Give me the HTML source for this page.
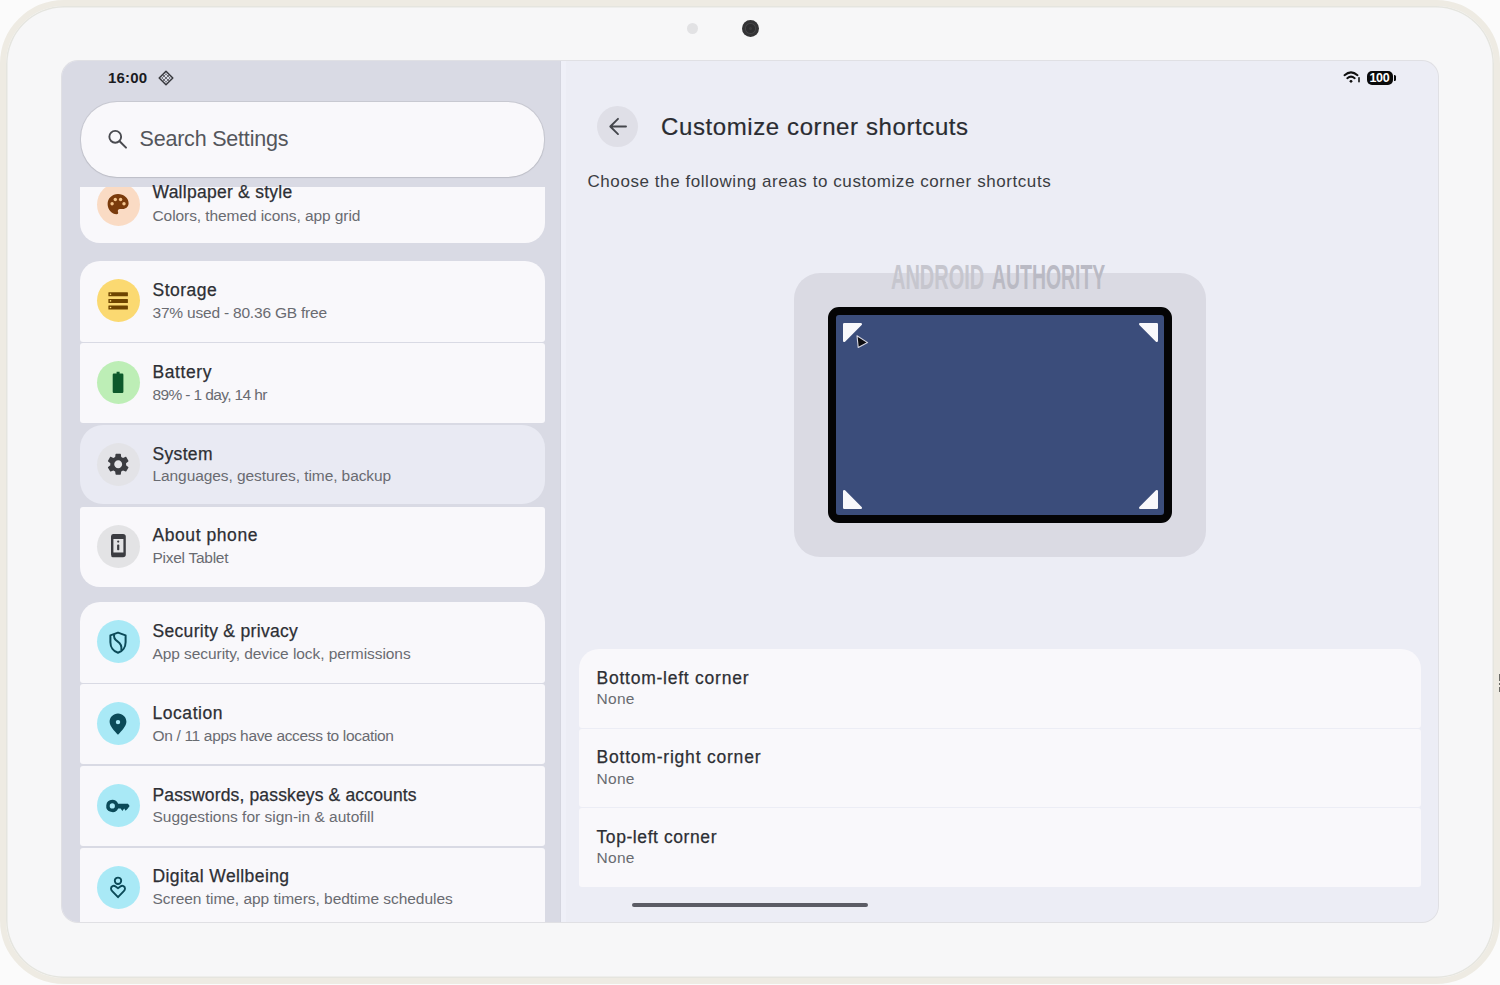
<!DOCTYPE html>
<html><head><meta charset="utf-8"><style>
*{margin:0;padding:0;box-sizing:border-box}
html,body{width:1500px;height:985px;overflow:hidden;background:#fbfbfb;font-family:"Liberation Sans",sans-serif}
.a{position:absolute}
.tx{position:absolute;line-height:1;white-space:nowrap}
#frame{position:absolute;left:0;top:0;width:1500px;height:984px;border-radius:64px;border:6.5px solid #eeebe3;background:#f7f7f8;box-shadow:inset 0 0 0 1.5px #e5e5df}
#screen{position:absolute;left:62px;top:61px;width:1376px;height:861px;border-radius:16px;overflow:hidden;background:#ecedf5;box-shadow:0 0 0 1px #e0e0e4}
#pc{position:absolute;left:-62px;top:-61px;width:1500px;height:985px}
.card{position:absolute;left:79.5px;width:465px;height:80.3px;background:#f9f8fb;border-radius:3px}
.ic{position:absolute;left:96.5px;width:43px;height:43px;border-radius:50%}
.rc{position:absolute;left:579px;width:842px;height:78.5px;background:#f9f8fb;border-radius:3px}
svg{position:absolute;overflow:visible}
</style></head><body>
<div id="frame"></div>
<div class="a" style="left:686.5px;top:22.8px;width:11px;height:11px;border-radius:50%;background:#e2e2e4"></div>
<div class="a" style="left:741.5px;top:20.3px;width:17px;height:17px;border-radius:50%;background:radial-gradient(circle at 50% 50%, #3a3a3c 0 1.2px, #2e2e30 1.6px 4.2px, #444446 5px, #343436 6px)"></div>
<div class="a" style="left:1499px;top:674px;width:1px;height:7px;background:#6b6b66"></div><div class="a" style="left:1499px;top:683px;width:1px;height:2px;background:#6b6b66"></div><div class="a" style="left:1499px;top:687px;width:1px;height:5px;background:#6b6b66"></div>
<div id="screen"><div id="pc">
<div class="a" style="left:62px;top:61px;width:499px;height:861px;background:#d9dae4;box-shadow:inset -1px 0 0 #d4d5df"></div>
<div class="a" style="left:561px;top:61px;width:5px;height:861px;background:#eff0f8"></div>
<div class="tx" style="left:108px;top:70.0px;font-size:15px;letter-spacing:0.2px;color:#1a1b1f;-webkit-text-stroke:0px #1a1b1f;font-weight:bold">16:00</div>
<svg style="left:158px;top:70px" width="16" height="16" viewBox="0 0 16 16"><path d="M8 1.2 L14.8 8 L8 14.8 L1.2 8 Z" fill="none" stroke="#3a3b40" stroke-width="1.5" stroke-linejoin="round"/><g fill="#3a3b40"><circle cx="6" cy="6" r="0.9"/><circle cx="10" cy="6" r="0.9"/><circle cx="8" cy="8" r="0.9"/><circle cx="6" cy="10" r="0.9"/><circle cx="10" cy="10" r="0.9"/><circle cx="4.3" cy="8" r="0.7"/><circle cx="11.7" cy="8" r="0.7"/><circle cx="8" cy="4.3" r="0.7"/><circle cx="8" cy="11.7" r="0.7"/></g></svg>
<svg style="left:1343px;top:70px" width="18" height="14" viewBox="0 0 18 14"><path d="M1.5 5.2 Q8 -0.5 14.5 5.2" fill="none" stroke="#111" stroke-width="2" stroke-linecap="round"/><path d="M4.3 8.2 Q8 5 11.7 8.2" fill="none" stroke="#111" stroke-width="2" stroke-linecap="round"/><circle cx="8" cy="11.3" r="1.4" fill="#111"/><rect x="15.2" y="7" width="1.6" height="5.5" rx="0.8" fill="#111"/></svg>
<div class="a" style="left:1367px;top:70.5px;width:26px;height:14.5px;border-radius:5px;background:#0a0a0a"></div>
<div class="a" style="left:1393.5px;top:75px;width:2.5px;height:6px;border-radius:0 1.5px 1.5px 0;background:#0a0a0a"></div>
<div class="tx" style="left:1369.5px;top:71.8px;font-size:12.5px;font-weight:bold;color:#fff;letter-spacing:-0.35px">100</div>
<div class="a" style="left:80.8px;top:101.8px;width:463px;height:75.2px;border-radius:36px;background:#f9f8fb;box-shadow:0 0.6px 1.2px #b5b6bf, 0 0 0 1px #c9cad3"></div>
<svg style="left:106px;top:128px" width="22" height="22" viewBox="0 0 22 22"><circle cx="9.25" cy="8.8" r="5.9" fill="none" stroke="#4a4b50" stroke-width="1.9"/><path d="M13.6 13.2 L20 19.6" stroke="#4a4b50" stroke-width="2" stroke-linecap="round"/></svg>
<div class="tx" style="left:139.5px;top:128.5px;font-size:21.5px;letter-spacing:-0.2px;color:#54565c;">Search Settings</div>
<div class="a" style="left:62px;top:187px;width:500px;height:735px;overflow:hidden"><div class="a" style="left:-62px;top:-187px;width:1500px;height:985px">
<div class="card" style="top:187px;height:56.3px;border-radius:0 0 20px 20px"></div>
<div class="card" style="top:261.3px;border-radius:20px 20px 3px 3px"></div>
<div class="card" style="top:343.1px"></div>
<div class="card" style="top:424.6px;height:79px;border-radius:23px;background:#e9eaf3"></div>
<div class="card" style="top:506.7px;border-radius:3px 3px 20px 20px"></div>
<div class="card" style="top:602.3px;border-radius:20px 20px 3px 3px"></div>
<div class="card" style="top:684.1px"></div>
<div class="card" style="top:765.9px"></div>
<div class="card" style="top:847.7px"></div>
<div class="ic" style="top:182.9px;background:#fadbc4"></div>
<div class="tx" style="left:152.5px;top:208.0px;font-size:15.5px;letter-spacing:-0.08px;color:#696b71;">Colors, themed icons, app grid</div>
<div class="ic" style="top:279.3px;background:#fbd971"></div>
<div class="tx" style="left:152.5px;top:281.9px;font-size:17.5px;letter-spacing:0.5px;color:#2d2f34;-webkit-text-stroke:0.25px #2d2f34;">Storage</div>
<div class="tx" style="left:152.5px;top:304.8px;font-size:15.5px;letter-spacing:-0.2px;color:#696b71;">37% used - 80.36 GB free</div>
<div class="ic" style="top:361.1px;background:#bdeeb6"></div>
<div class="tx" style="left:152.5px;top:363.7px;font-size:17.5px;letter-spacing:0.59px;color:#2d2f34;-webkit-text-stroke:0.25px #2d2f34;">Battery</div>
<div class="tx" style="left:152.5px;top:386.6px;font-size:15.5px;letter-spacing:-0.62px;color:#696b71;">89% - 1 day, 14 hr</div>
<div class="ic" style="top:442.9px;background:#e3e3e7"></div>
<div class="tx" style="left:152.5px;top:445.5px;font-size:17.5px;letter-spacing:0.33px;color:#2d2f34;-webkit-text-stroke:0.25px #2d2f34;">System</div>
<div class="tx" style="left:152.5px;top:468.4px;font-size:15.5px;letter-spacing:-0.08px;color:#696b71;">Languages, gestures, time, backup</div>
<div class="ic" style="top:524.7px;background:#e3e3e5"></div>
<div class="tx" style="left:152.5px;top:527.3px;font-size:17.5px;letter-spacing:0.57px;color:#2d2f34;-webkit-text-stroke:0.25px #2d2f34;">About phone</div>
<div class="tx" style="left:152.5px;top:550.2px;font-size:15.5px;letter-spacing:-0.27px;color:#696b71;">Pixel Tablet</div>
<div class="ic" style="top:620.3px;background:#a9e9f6"></div>
<div class="tx" style="left:152.5px;top:622.9px;font-size:17.5px;letter-spacing:0.31px;color:#2d2f34;-webkit-text-stroke:0.25px #2d2f34;">Security &amp; privacy</div>
<div class="tx" style="left:152.5px;top:645.8px;font-size:15.5px;letter-spacing:-0.07px;color:#696b71;">App security, device lock, permissions</div>
<div class="ic" style="top:702.1px;background:#a9e9f6"></div>
<div class="tx" style="left:152.5px;top:704.7px;font-size:17.5px;letter-spacing:0.55px;color:#2d2f34;-webkit-text-stroke:0.25px #2d2f34;">Location</div>
<div class="tx" style="left:152.5px;top:727.6px;font-size:15.5px;letter-spacing:-0.33px;color:#696b71;">On / 11 apps have access to location</div>
<div class="ic" style="top:783.9px;background:#a9e9f6"></div>
<div class="tx" style="left:152.5px;top:786.5px;font-size:17.5px;letter-spacing:0.15px;color:#2d2f34;-webkit-text-stroke:0.25px #2d2f34;">Passwords, passkeys &amp; accounts</div>
<div class="tx" style="left:152.5px;top:809.4px;font-size:15.5px;letter-spacing:0.0px;color:#696b71;">Suggestions for sign-in &amp; autofill</div>
<div class="ic" style="top:865.7px;background:#a9e9f6"></div>
<div class="tx" style="left:152.5px;top:868.3px;font-size:17.5px;letter-spacing:0.41px;color:#2d2f34;-webkit-text-stroke:0.25px #2d2f34;">Digital Wellbeing</div>
<div class="tx" style="left:152.5px;top:891.2px;font-size:15.5px;letter-spacing:-0.03px;color:#696b71;">Screen time, app timers, bedtime schedules</div>
<svg style="left:106px;top:192px" width="24" height="24" viewBox="0 0 24 24"><path d="M12 2 C6.2 2 1.6 6.4 1.6 12 C1.6 17.6 6 22.2 10.6 22.2 C12.2 22.2 12.4 21 12 20 C11.4 18.6 12.2 17 14 17 L16.6 17 C20 17 22.6 14.6 22.6 11.2 C22.6 6 17.8 2 12 2 Z" fill="#7a3b0c"/><g fill="#f5c58e"><circle cx="9.3" cy="7.5" r="1.7"/><circle cx="14.6" cy="7.5" r="1.7"/><circle cx="6.1" cy="11.8" r="1.7"/><circle cx="18" cy="11.7" r="1.7"/></g></svg>
<svg style="left:108px;top:291px" width="20" height="20" viewBox="0 0 20 20"><g fill="#6e4400"><rect x="0.4" y="1.3" width="19.5" height="4" rx="0.5"/><rect x="0.4" y="7.9" width="19.5" height="4" rx="0.5"/><rect x="0.4" y="14.5" width="19.5" height="4" rx="0.5"/></g><g fill="#fbd971"><circle cx="2.5" cy="3.3" r="0.8"/><circle cx="2.5" cy="9.9" r="0.8"/><circle cx="2.5" cy="16.5" r="0.8"/></g></svg>
<svg style="left:112px;top:371px" width="12" height="23" viewBox="0 0 12 23"><path d="M4.6 0.8 H7.6 V2.6 H10.2 Q11.4 2.6 11.4 3.8 V20.8 Q11.4 22 10.2 22 H1.8 Q0.7 22 0.7 20.8 V3.8 Q0.7 2.6 1.8 2.6 H4.6 Z" fill="#0d5a2b"/></svg>
<svg style="left:104.8px;top:450.7px" width="26.4" height="26.4" viewBox="0 0 24 24"><path fill="#3b3c41" fill-rule="evenodd" d="M19.14 12.94c.04-.3.06-.61.06-.94 0-.32-.02-.64-.07-.94l2.03-1.58c.18-.14.23-.41.12-.61l-1.92-3.32c-.12-.22-.37-.29-.59-.22l-2.39.96c-.5-.38-1.03-.7-1.62-.94l-.36-2.54c-.04-.24-.24-.41-.48-.41h-3.84c-.24 0-.43.17-.47.41l-.36 2.54c-.59.24-1.13.57-1.62.94l-2.39-.96c-.22-.08-.47 0-.59.22L2.74 8.87c-.12.21-.08.47.12.61l2.03 1.58c-.05.3-.09.63-.09.94s.02.64.07.94l-2.03 1.58c-.18.14-.23.41-.12.61l1.92 3.32c.12.22.37.29.59.22l2.39-.96c.5.38 1.03.7 1.62.94l.36 2.54c.05.24.24.41.48.41h3.84c.24 0 .44-.17.47-.41l.36-2.54c.59-.24 1.13-.56 1.62-.94l2.39.96c.22.08.47 0 .59-.22l1.92-3.32c.12-.22.07-.47-.12-.61l-2.01-1.58zM12 15.6c-1.98 0-3.6-1.62-3.6-3.6s1.62-3.6 3.6-3.6 3.6 1.62 3.6 3.6-1.62 3.6-3.6 3.6z"/></svg>
<svg style="left:110px;top:533px" width="16" height="25" viewBox="0 0 16 25"><path fill="#3b3c41" fill-rule="evenodd" d="M3 1 H13 Q15.8 1 15.8 3.5 V21.5 Q15.8 24.2 13 24.2 H3 Q1 24.2 1 21.5 V3.5 Q1 1 3 1 Z M3.4 6 V19.5 H13.4 V6 Z"/><circle cx="8.2" cy="8.6" r="1.1" fill="#3b3c41"/><rect x="7.1" y="11.6" width="2.2" height="5.6" rx="0.8" fill="#3b3c41"/></svg>
<svg style="left:108px;top:631px" width="20" height="24" viewBox="0 0 20 24"><path d="M10 1.6 L17.6 4.4 V11.2 C17.6 16.2 14.4 20.4 10 21.8 C5.6 20.4 2.4 16.2 2.4 11.2 V4.4 Z" fill="none" stroke="#0b4a58" stroke-width="2" stroke-linejoin="round"/><path d="M6.2 3.2 C5.5 6.2 6.5 8.4 9.5 10.4 C12.8 12.6 14 15.2 13.2 19" fill="none" stroke="#0b4a58" stroke-width="2"/></svg>
<svg style="left:108px;top:712px" width="20" height="24" viewBox="0 0 20 24"><path fill="#0b4a58" fill-rule="evenodd" d="M10 1.6 C14.6 1.6 18.4 5.2 18.4 9.8 C18.4 14 14 18.6 10 22.8 C6 18.6 1.6 14 1.6 9.8 C1.6 5.2 5.4 1.6 10 1.6 Z M10 7.9 A2.2 2.2 0 1 0 10 12.3 A2.2 2.2 0 1 0 10 7.9 Z"/></svg>
<svg style="left:105px;top:798px" width="26" height="16" viewBox="0 0 26 16"><path fill="#0b4a58" fill-rule="evenodd" d="M7.3 1.7 A6.2 6.2 0 1 0 13.1 10.4 H15.6 L17.4 13 L19.2 10.4 L20.6 12.8 L22.8 10.4 L24.6 8.1 L23 5.7 H13.1 A6.2 6.2 0 0 0 7.3 1.7 Z M7.3 5.3 A2.6 2.6 0 1 0 7.3 10.5 A2.6 2.6 0 1 0 7.3 5.3 Z"/></svg>
<svg style="left:108px;top:875px" width="20" height="24" viewBox="0 0 20 24"><circle cx="10" cy="5.8" r="3.2" fill="none" stroke="#0b4a58" stroke-width="1.9"/><path d="M10 13.2 L7.6 11.4 C5.6 9.9 3 11.2 3 13.6 C3 14.6 3.5 15.4 4.2 16.1 L10 22.2 L15.8 16.1 C16.5 15.4 17 14.6 17 13.6 C17 11.2 14.4 9.9 12.4 11.4 Z" fill="none" stroke="#0b4a58" stroke-width="1.9" stroke-linejoin="round"/></svg>
</div></div>
<div class="tx" style="left:152.5px;top:184.4px;font-size:17.5px;letter-spacing:0.26px;color:#2d2f34;-webkit-text-stroke:0.25px #2d2f34;">Wallpaper &amp; style</div>
<div class="a" style="left:597px;top:105.5px;width:41px;height:41px;border-radius:50%;background:#dfdfe7"></div>
<svg style="left:606px;top:114px" width="24" height="24" viewBox="0 0 24 24"><path d="M12 4.8 L4.3 12.5 L12 20.1 M4.5 12.5 H20" fill="none" stroke="#44464c" stroke-width="1.9" stroke-linecap="round" stroke-linejoin="round"/></svg>
<div class="tx" style="left:661px;top:115.4px;font-size:24px;letter-spacing:0.6px;color:#2a2c31;-webkit-text-stroke:0.2px #2a2c31;">Customize corner shortcuts</div>
<div class="tx" style="left:587.5px;top:172.9px;font-size:17px;letter-spacing:0.57px;color:#3b3d43;">Choose the following areas to customize corner shortcuts</div>
<div class="a" style="left:794px;top:273px;width:412px;height:284px;border-radius:26px;background:#dadae3"></div>
<div class="tx" style="left:890.5px;top:259.4px;font-size:35px;font-weight:bold;color:#c6c6ce;transform:scaleX(0.57);transform-origin:0 0">ANDROID</div>
<div class="tx" style="left:992px;top:259.4px;font-size:35px;font-weight:bold;color:#babac4;transform:scaleX(0.555);transform-origin:0 0">AUTHORITY</div>
<div class="a" style="left:828px;top:307px;width:344px;height:216px;border-radius:11px;background:#3b4d7b;border:8.5px solid #040405"></div>
<svg style="left:842.5px;top:322.5px" width="19" height="19" viewBox="0 0 19 19"><path d="M1.2 1.2 H17.8 L1.2 17.8 Z" fill="#f8f8fb" stroke="#f8f8fb" stroke-width="2.4" stroke-linejoin="round"/></svg>
<svg style="left:1138.5px;top:322.5px" width="19" height="19" viewBox="0 0 19 19"><path d="M1.2 1.2 H17.8 V17.8 Z" fill="#f8f8fb" stroke="#f8f8fb" stroke-width="2.4" stroke-linejoin="round"/></svg>
<svg style="left:842.5px;top:489.5px" width="19" height="19" viewBox="0 0 19 19"><path d="M1.2 1.2 L17.8 17.8 H1.2 Z" fill="#f8f8fb" stroke="#f8f8fb" stroke-width="2.4" stroke-linejoin="round"/></svg>
<svg style="left:1138.5px;top:489.5px" width="19" height="19" viewBox="0 0 19 19"><path d="M17.8 1.2 V17.8 H1.2 Z" fill="#f8f8fb" stroke="#f8f8fb" stroke-width="2.4" stroke-linejoin="round"/></svg>
<svg style="left:855px;top:334px" width="14" height="15" viewBox="0 0 14 15"><path d="M2 1.8 L12.6 8.6 L3.2 13.4 Z" fill="#0c0c10" stroke="#d8d8e4" stroke-width="1.1" stroke-linejoin="round"/></svg>
<div class="rc" style="top:649px;border-radius:20px 20px 3px 3px"></div>
<div class="rc" style="top:728.5px"></div>
<div class="rc" style="top:808px"></div>
<div class="tx" style="left:596.5px;top:669.8px;font-size:17.5px;letter-spacing:0.76px;color:#2d2f34;-webkit-text-stroke:0.25px #2d2f34;">Bottom-left corner</div>
<div class="tx" style="left:596.5px;top:691.4px;font-size:15.5px;letter-spacing:0.31px;color:#696b71;">None</div>
<div class="tx" style="left:596.5px;top:749.3px;font-size:17.5px;letter-spacing:0.79px;color:#2d2f34;-webkit-text-stroke:0.25px #2d2f34;">Bottom-right corner</div>
<div class="tx" style="left:596.5px;top:770.9px;font-size:15.5px;letter-spacing:0.31px;color:#696b71;">None</div>
<div class="tx" style="left:596.5px;top:828.8px;font-size:17.5px;letter-spacing:0.58px;color:#2d2f34;-webkit-text-stroke:0.25px #2d2f34;">Top-left corner</div>
<div class="tx" style="left:596.5px;top:850.4px;font-size:15.5px;letter-spacing:0.31px;color:#696b71;">None</div>
<div class="a" style="left:632px;top:903px;width:236px;height:4px;border-radius:2px;background:#5b5c65"></div>
</div></div>
</body></html>
